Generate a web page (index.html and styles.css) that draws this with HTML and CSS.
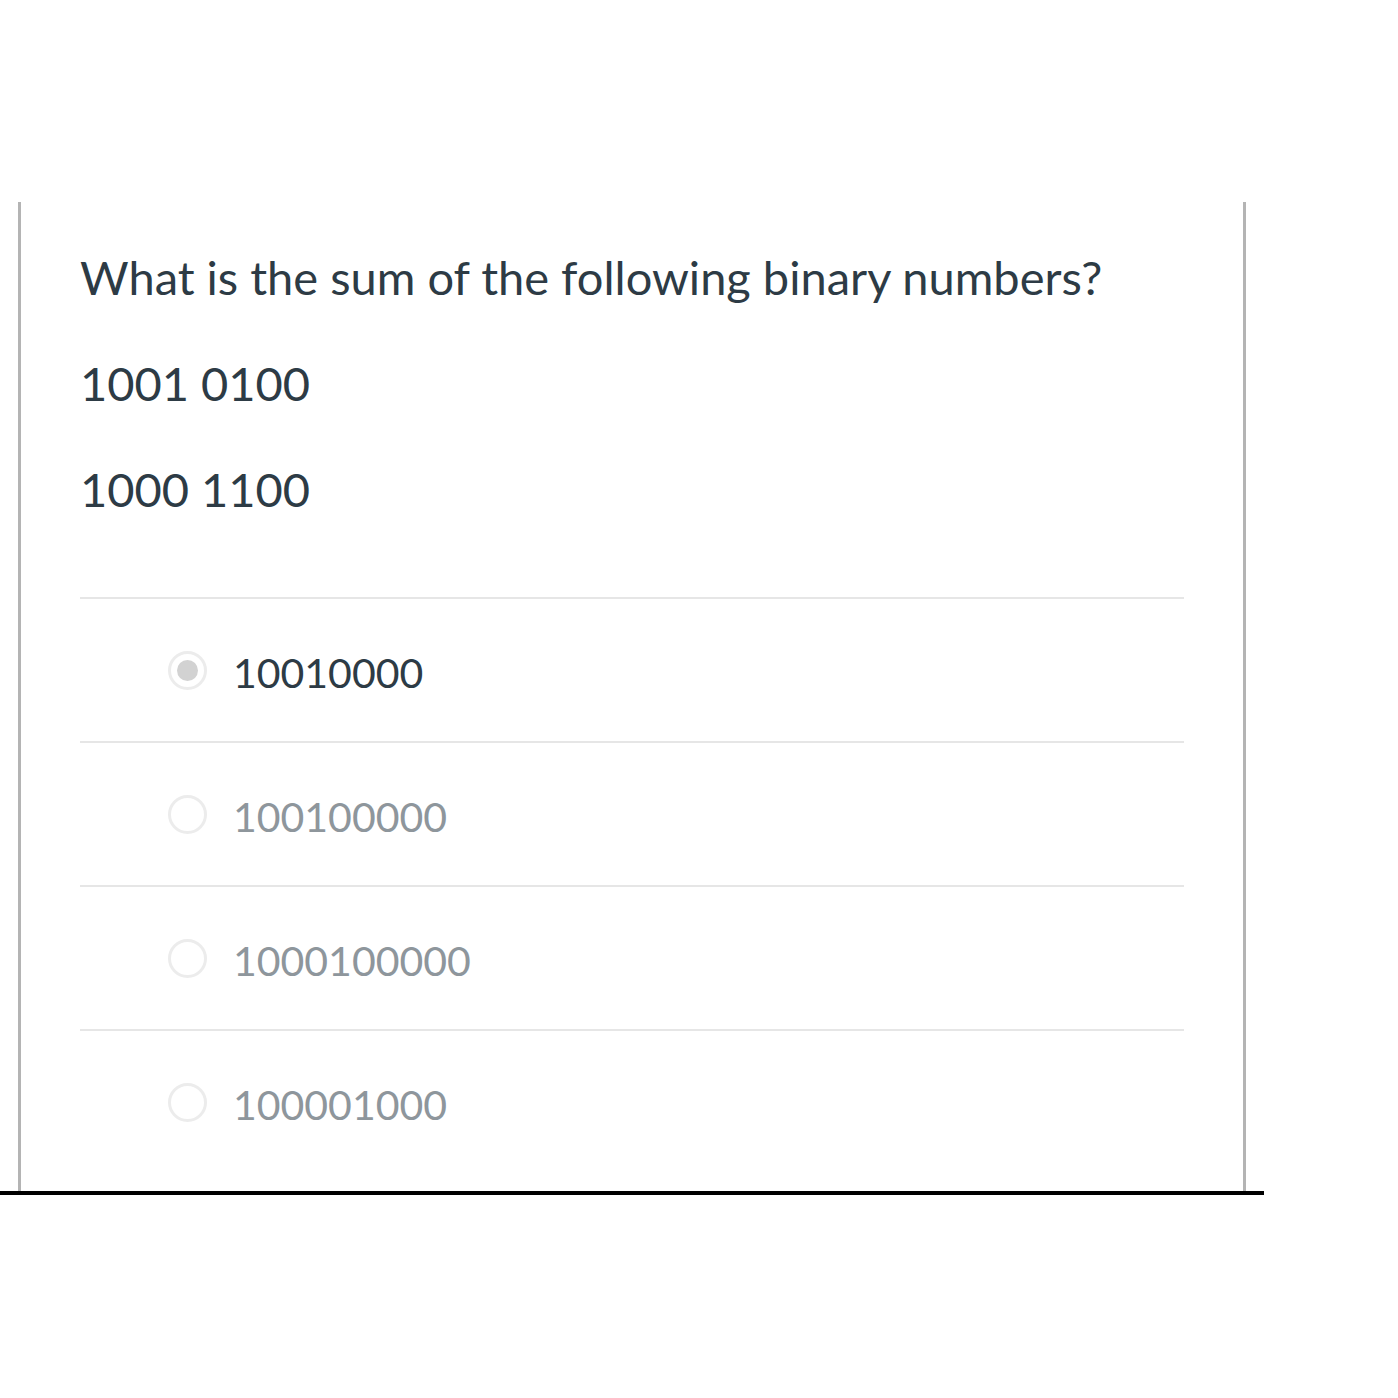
FILE: index.html
```html
<!DOCTYPE html>
<html>
<head>
<meta charset="utf-8">
<link rel="stylesheet" href="styles.css">
</head>
<body>
<div class="frame">
  <div class="card">
    <div class="question">
      <p class="q-line">What is the sum of the following binary numbers?</p>
      <p class="q-line">1001 0100</p>
      <p class="q-line">1000 1100</p>
    </div>
    <div class="answers">
      <div class="answer selected">
        <span class="radio"><span class="dot"></span></span>
        <span class="label">10010000</span>
      </div>
      <div class="answer">
        <span class="radio"></span>
        <span class="label">100100000</span>
      </div>
      <div class="answer">
        <span class="radio"></span>
        <span class="label">1000100000</span>
      </div>
      <div class="answer">
        <span class="radio"></span>
        <span class="label">100001000</span>
      </div>
    </div>
  </div>
</div>
</body>
</html>
```
FILE: styles.css
```css
html, body {
  margin: 0;
  padding: 0;
  background: #ffffff;
}
body {
  font-family: Lato, "Liberation Sans", sans-serif;
  color: #2d3b45;
}
.frame {
  width: 1264px;
  padding-top: 202px;
  border-bottom: 4px solid #000000;
}
.card {
  margin-left: 18px;
  border-left: 3px solid #b4b4b4;
  border-right: 3px solid #b4b4b4;
  padding: 0 59px 18px 59px;
  box-sizing: content-box;
  width: 1104px;
}
.question {
  padding-top: 22px;
  padding-bottom: 55px;
}
.q-line {
  margin: 0;
  font-size: 47px;
  line-height: 106px;
  height: 106px;
}
.answer {
  height: 142px;
  border-top: 2px solid #e6e6e6;
  display: flex;
  align-items: center;
  padding-left: 88px;
  font-size: 41px;
  color: #8e969c;
}
.answer.selected {
  color: #2d3b45;
}
.radio {
  width: 33px;
  height: 33px;
  border: 3px solid #ececec;
  border-radius: 50%;
  display: flex;
  align-items: center;
  justify-content: center;
  margin-right: 26px;
  flex: none;
}
.dot {
  width: 21px;
  height: 21px;
  border-radius: 50%;
  background: #d2d2d2;
}
.label {
  line-height: 1;
  padding-top: 4px;
}
```
